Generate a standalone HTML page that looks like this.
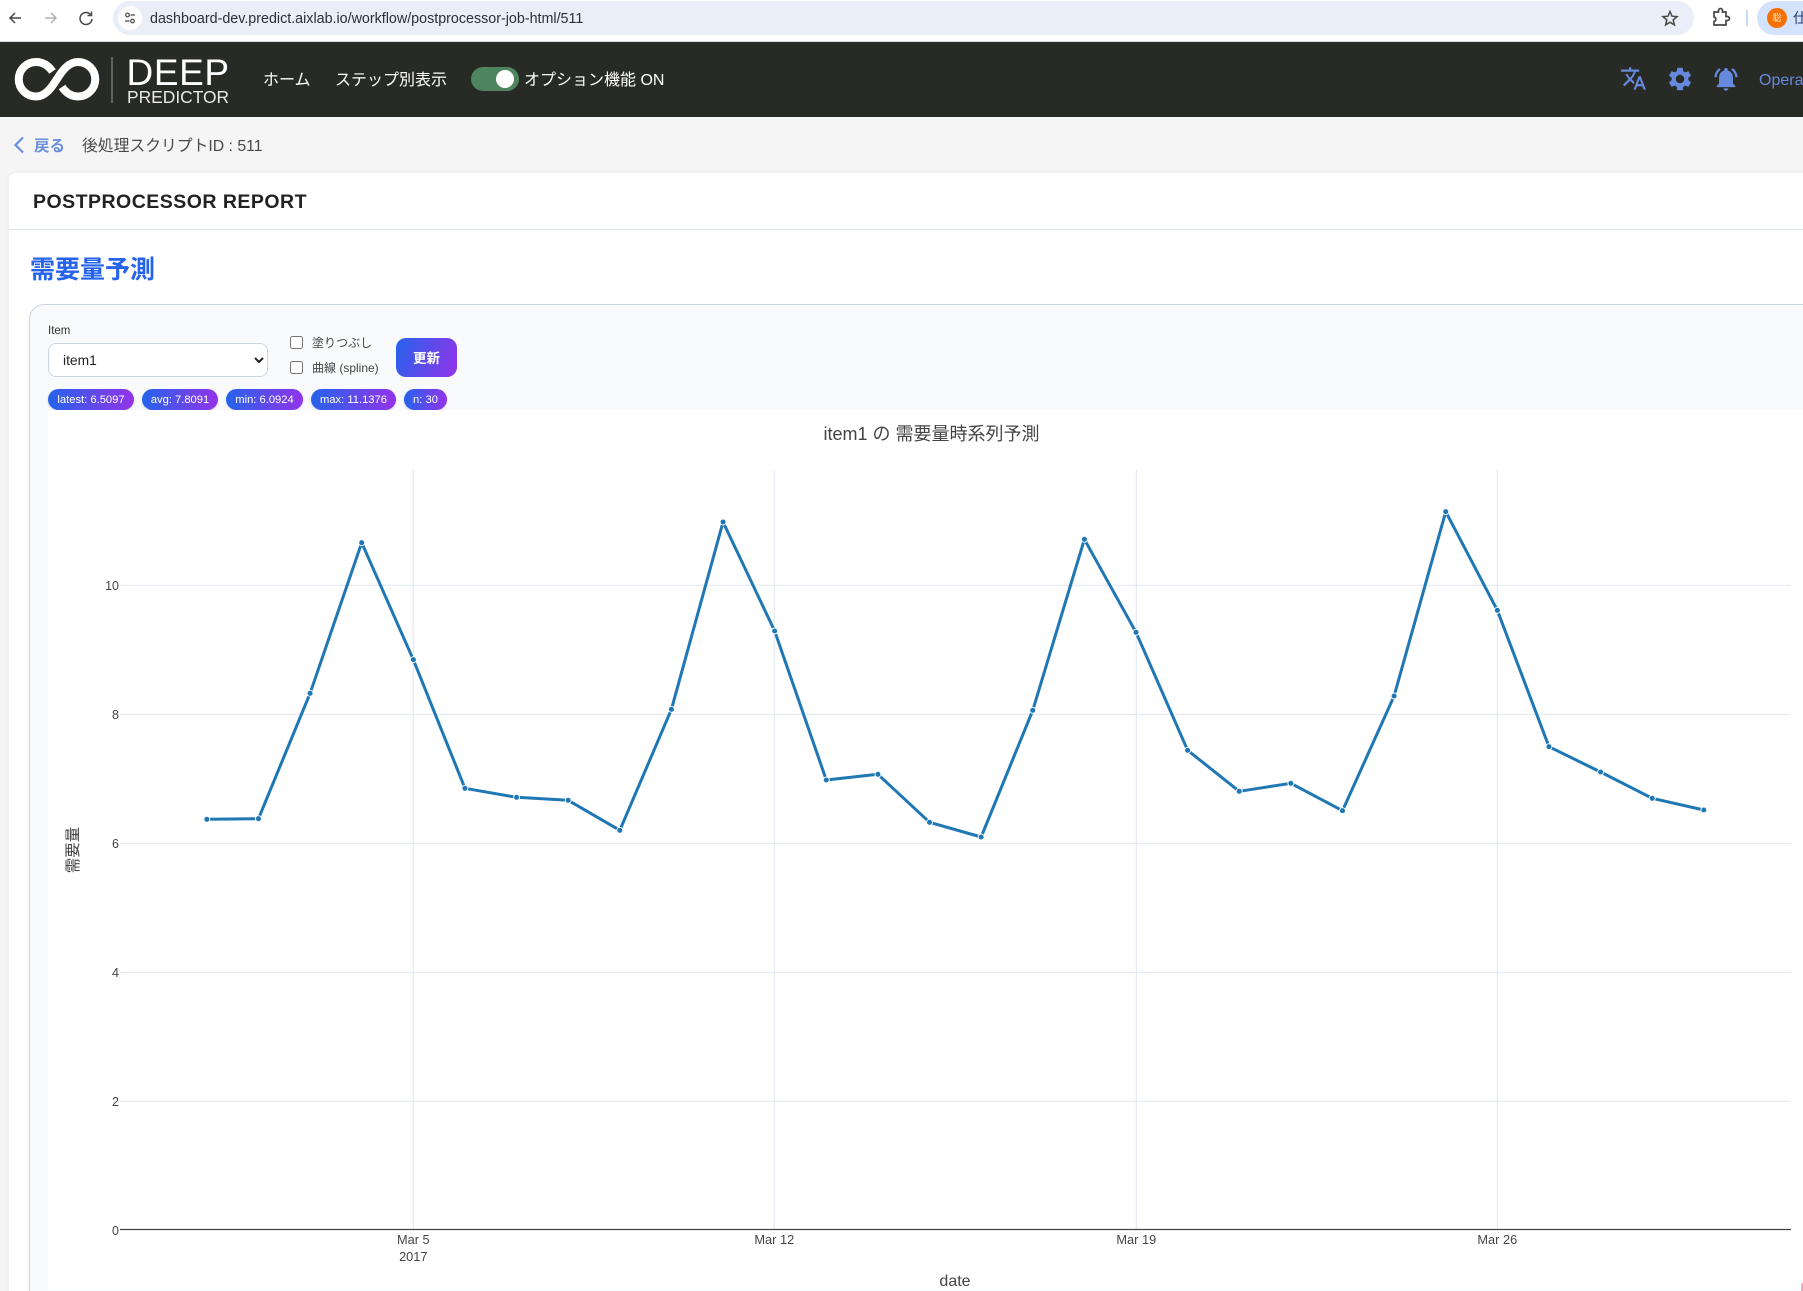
<!DOCTYPE html>
<html lang="ja"><head><meta charset="utf-8"><title>Postprocessor Report</title>
<style>
*{box-sizing:border-box}
html,body{margin:0;padding:0;width:1803px;height:1291px;overflow:hidden;background:#f5f5f5;font-family:"Liberation Sans","Noto Sans CJK JP",sans-serif}
#page{position:relative;width:1803px;height:1291px;overflow:hidden;background:#f5f5f5}
.a{position:absolute;white-space:nowrap}
.pill{position:absolute;top:389px;height:21px;border-radius:11px;background:linear-gradient(90deg,#2563eb,#9333ea);color:#fff;font-size:11.2px;line-height:23px;text-align:center;box-shadow:0 1px 2px rgba(60,60,120,.2);overflow:hidden}
svg{position:absolute;overflow:visible}
</style></head><body><div id="page">
<!-- browser chrome -->
<div class="a" style="left:0;top:0;width:1803px;height:42px;background:#fff;border-bottom:1px solid #dcdcdc"></div>
<div class="a" style="left:113px;top:1px;width:1581px;height:34px;border-radius:17px;background:#e9eef8"></div>
<div class="a" style="left:118px;top:6px;width:24px;height:24px;border-radius:12px;background:#fff"></div>
<svg style="left:0;top:0" width="1803" height="42" fill="none" stroke-width="1.5">
 <path d="M21 18H10M15 13L10 18l5 5" stroke="#474747"/>
 <path d="M45 18h11M51 13l5 5-5 5" stroke="#b1b1b1"/>
 <path d="M90.500 14.500A6 6 0 1 0 92 19" stroke="#474747"/><path d="M91.500 11.500v4h-4" stroke="#474747"/>
 <g stroke="#474747" stroke-width="1.200"><circle cx="127.500" cy="15" r="1.800"/><path d="M130.500 15H135M125 21h4.500"/><circle cx="132.500" cy="21" r="1.800"/></g>
 <path d="M1670 11.500l2 4.700 5.100.4-3.900 3.300 1.200 5-4.400-2.700-4.400 2.700 1.200-5-3.900-3.300 5.100-.4z" stroke="#474747" stroke-width="1.500"/>
 <path d="M1714 12h4.500v-1.500a2 2 0 0 1 4 0V12h3.500v4.500h1.500a2 2 0 0 1 0 4H1726V25h-12v-3.500a2.300 2.300 0 0 0 0-4.500z" stroke="#474747" stroke-width="1.700"/>
 <path d="M1747 10v16" stroke="#c7d9f5" stroke-width="2"/>
</svg>
<div class="a" style="left:150px;top:9.500px;font-size:14.300px;line-height:18px;color:#2b2f36">dashboard-dev.predict.aixlab.io/workflow/postprocessor-job-html/511</div>
<div class="a" style="left:1757px;top:1px;width:60px;height:34px;border-radius:17px 0 0 17px;background:#d3e3fd"></div>
<div class="a" style="left:1767px;top:8px;width:20px;height:20px;border-radius:10px;background:#f57200;color:#ffe9d6;font-size:9px;line-height:20px;text-align:center">聡</div>
<div class="a" style="left:1793px;top:9px;font-size:14px;line-height:18px;color:#1f3a6e">仕</div>

<!-- app header -->
<div class="a" style="left:0;top:42px;width:1803px;height:75px;background:#282a25"></div>
<svg style="left:0;top:42px" width="240" height="75" fill="none">
 <path d="M52.500 29.500C48 23 42.500 20 36 20A17 17 0 0 0 36 54.500C45 54.500 51 46.500 57 37C63 27.500 69 20 78 20A17 17 0 0 1 78 54.500C71.500 54.500 66.500 51.500 62 45" stroke="#fff" stroke-width="8"/>
 <path d="M112 15v46" stroke="#8b8c88" stroke-width="1.200"/>
</svg>
<div class="a" style="left:126.500px;top:53px;font-size:37px;line-height:40px;letter-spacing:.6px;color:#fff">DEEP</div>
<div class="a" style="left:127px;top:87px;font-size:17.400px;line-height:20px;color:#e8e8e8">PREDICTOR</div>
<div class="a" style="left:263px;top:71px;font-size:16px;line-height:20px;color:#fff">ホーム</div>
<div class="a" style="left:335px;top:71px;font-size:16px;line-height:20px;color:#fff">ステップ別表示</div>
<div class="a" style="left:471px;top:67px;width:48px;height:24px;border-radius:12px;background:#4f8460"></div>
<div class="a" style="left:496px;top:70px;width:18px;height:18px;border-radius:9px;background:#fff"></div>
<div class="a" style="left:524px;top:71px;font-size:16px;line-height:20px;color:#fff">オプション機能 ON</div>
<svg style="left:1619.500px;top:65px" width="27" height="27" viewBox="0 0 24 24" fill="#6689dd"><path d="M12.870 15.070l-2.540-2.510.03-.03c1.740-1.940 2.980-4.170 3.710-6.530H17V4h-7V2H8v2H1v1.990h11.170C11.500 7.920 10.440 9.750 9 11.350 8.070 10.320 7.300 9.190 6.690 8h-2c.73 1.630 1.730 3.170 2.980 4.560l-5.090 5.020L4 19l5-5 3.110 3.110.76-2.040zM18.500 10h-2L12 22h2l1.120-3h4.750L21 22h2l-4.500-12zm-2.620 7l1.620-4.330L19.120 17h-3.240z"/></svg>
<svg style="left:1665.500px;top:65px" width="28" height="28" viewBox="0 0 24 24" fill="#6689dd"><path d="M19.140 12.940c.04-.3.06-.61.06-.94 0-.32-.02-.64-.07-.94l2.030-1.580c.18-.14.23-.41.12-.61l-1.920-3.320c-.12-.22-.37-.29-.59-.22l-2.390.96c-.5-.38-1.030-.7-1.620-.94l-.36-2.540c-.04-.24-.24-.41-.48-.41h-3.840c-.24 0-.43.17-.47.41l-.36 2.540c-.59.24-1.130.57-1.620.94l-2.390-.96c-.22-.08-.47 0-.59.22L2.740 8.870c-.12.21-.08.47.12.61l2.030 1.580c-.05.3-.09.63-.09.94s.02.64.07.94l-2.030 1.580c-.18.14-.23.41-.12.61l1.920 3.320c.12.22.37.29.59.22l2.390-.96c.5.38 1.030.7 1.620.94l.36 2.540c.05.24.24.41.48.41h3.840c.24 0 .44-.17.47-.41l.36-2.540c.59-.24 1.130-.56 1.620-.94l2.390.96c.22.08.47 0 .59-.22l1.920-3.320c.12-.22.07-.47-.12-.61l-2.010-1.580zM12 15.600c-1.980 0-3.600-1.620-3.600-3.600s1.620-3.600 3.600-3.600 3.600 1.620 3.600 3.600-1.620 3.600-3.600 3.600z"/></svg>
<svg style="left:1711.500px;top:65px" width="28" height="28" viewBox="0 0 24 24" fill="#6689dd"><path d="M7.580 4.080L6.150 2.650C3.750 4.480 2.170 7.300 2.030 10.500h2c.15-2.650 1.510-4.970 3.550-6.420zm12.390 6.420h2c-.15-3.200-1.730-6.020-4.120-7.850l-1.420 1.430c2.020 1.450 3.390 3.770 3.540 6.420zM18 11c0-3.070-1.640-5.640-4.500-6.320V4c0-.83-.67-1.500-1.500-1.500s-1.500.67-1.500 1.500v.68C7.630 5.360 6 7.920 6 11v5l-2 2v1h16v-1l-2-2v-5zm-6 11c.14 0 .27-.01.4-.04.65-.14 1.180-.58 1.440-1.180.1-.24.15-.5.15-.78h-4c.01 1.100.9 2 2.010 2z"/></svg>
<div class="a" style="left:1759px;top:71px;font-size:16px;line-height:20px;color:#6689dd">Opera</div>

<!-- breadcrumb -->
<svg style="left:0;top:130px" width="30" height="30" fill="none"><path d="M23 7.500L15.500 15l7.500 7.500" stroke="#6a8fd8" stroke-width="2.200"/></svg>
<div class="a" style="left:34px;top:136.500px;font-size:15.500px;line-height:20px;font-weight:700;color:#6a8fd8">戻る</div>
<div class="a" style="left:82px;top:137px;font-size:15.800px;line-height:20px;color:#4a4a4a">後処理スクリプトID : 511</div>

<!-- card -->
<div class="a" style="left:9px;top:173px;width:1800px;height:1130px;background:#fff;border-radius:7px 0 0 0;box-shadow:0 0 6px rgba(0,0,0,.05)"></div>
<div class="a" style="left:33px;top:189.500px;font-size:19.500px;line-height:24px;font-weight:700;letter-spacing:.48px;color:#222">POSTPROCESSOR REPORT</div>
<div class="a" style="left:9px;top:229px;width:1794px;height:1px;background:#dde6ee"></div>
<div class="a" style="left:30px;top:254px;font-size:25px;line-height:32px;font-weight:700;color:#2563eb">需要量予測</div>

<!-- panel -->
<div class="a" style="left:29px;top:304px;width:1800px;height:1050px;background:#f8fafc;border:1px solid #cbd5e1;border-radius:15px"></div>
<label class="a" style="left:48px;top:324px;font-size:11.500px;line-height:14px;color:#333">Item</label>
<select class="a" style="left:48px;top:343px;width:220px;height:34px;border:1px solid #cbd5e1;border-radius:8px;background-color:#fff;font:13.800px 'Liberation Sans',sans-serif;color:#222;padding-left:10px"><option>item1</option></select>
<input type="checkbox" class="a" style="left:290px;top:336px;width:13px;height:13px;margin:0">
<input type="checkbox" class="a" style="left:290px;top:361px;width:13px;height:13px;margin:0">
<div class="a" style="left:312px;top:335px;font-size:12px;line-height:16px;color:#444">塗りつぶし</div>
<div class="a" style="left:312px;top:360px;font-size:12px;line-height:16px;color:#444">曲線 (spline)</div>
<div class="a" style="left:396px;top:338px;width:61px;height:39px;border-radius:10px;background:linear-gradient(110deg,#2563eb,#9333ea);color:#fff;font-size:13.500px;font-weight:700;line-height:41px;text-align:center">更新</div>
<div class="pill" style="left:48px;width:86px">latest: 6.5097</div>
<div class="pill" style="left:142px;width:76px">avg: 7.8091</div>
<div class="pill" style="left:226px;width:77px">min: 6.0924</div>
<div class="pill" style="left:311px;width:85px">max: 11.1376</div>
<div class="pill" style="left:404px;width:43px">n: 30</div>

<!-- chart -->
<div class="a" style="left:48px;top:410px;width:1760px;height:880px;background:#fff"></div>
<svg style="left:0;top:0" width="1803" height="1291" font-family="'Liberation Sans','Noto Sans CJK JP',sans-serif" fill="#444">
 <g stroke="#e4e9f2" stroke-width="1.150" fill="none">
  <path d="M413.300 470V1229M774.300 470V1229M1136.300 470V1229M1497.300 470V1229"/>
  <path d="M120 585.300H1791M120 714.300H1791M120 843.300H1791M120 972.300H1791M120 1101.300H1791"/>
 </g>
 <path d="M120 1229.500H1791" stroke="#444" stroke-width="1.300" fill="none"/>
 <polyline fill="none" stroke="#1f77b4" stroke-width="3" stroke-linejoin="round" points="206.85,819.3 258.47,818.7 310.09,693.3 361.71,542.7 413.33,659.7 464.95,788.3 516.57,797.3 568.19,800.3 619.81,830.3 671.43,709.3 723.05,522 774.67,631 826.29,780 877.91,774.3 929.53,822.3 981.15,837 1032.77,710.3 1084.39,539.3 1136.01,632.3 1187.63,750.3 1239.25,791.3 1290.87,783.3 1342.49,810.7 1394.11,696 1445.73,511.7 1497.35,610.3 1548.97,746.7 1600.59,772 1652.21,798.3 1703.83,810"/>
 <g fill="#1f77b4" stroke="#fff" stroke-width=".9">
  <circle cx="206.85" cy="819.3" r="3"/><circle cx="258.47" cy="818.7" r="3"/><circle cx="310.09" cy="693.3" r="3"/><circle cx="361.71" cy="542.7" r="3"/><circle cx="413.33" cy="659.7" r="3"/><circle cx="464.95" cy="788.3" r="3"/><circle cx="516.57" cy="797.3" r="3"/><circle cx="568.19" cy="800.3" r="3"/><circle cx="619.81" cy="830.3" r="3"/><circle cx="671.43" cy="709.3" r="3"/><circle cx="723.05" cy="522" r="3"/><circle cx="774.67" cy="631" r="3"/><circle cx="826.29" cy="780" r="3"/><circle cx="877.91" cy="774.3" r="3"/><circle cx="929.53" cy="822.3" r="3"/><circle cx="981.15" cy="837" r="3"/><circle cx="1032.77" cy="710.3" r="3"/><circle cx="1084.39" cy="539.3" r="3"/><circle cx="1136.01" cy="632.3" r="3"/><circle cx="1187.63" cy="750.3" r="3"/><circle cx="1239.25" cy="791.3" r="3"/><circle cx="1290.87" cy="783.3" r="3"/><circle cx="1342.49" cy="810.7" r="3"/><circle cx="1394.11" cy="696" r="3"/><circle cx="1445.73" cy="511.7" r="3"/><circle cx="1497.35" cy="610.3" r="3"/><circle cx="1548.97" cy="746.7" r="3"/><circle cx="1600.59" cy="772" r="3"/><circle cx="1652.21" cy="798.3" r="3"/><circle cx="1703.83" cy="810" r="3"/>
 </g>
 <text x="931.500" y="440" font-size="18" text-anchor="middle">item1 の 需要量時系列予測</text>
 <g font-size="12.500" text-anchor="end">
  <text x="119" y="590">10</text><text x="119" y="719">8</text><text x="119" y="848">6</text><text x="119" y="977">4</text><text x="119" y="1106">2</text><text x="119" y="1235">0</text>
 </g>
 <g font-size="12.800" text-anchor="middle">
  <text x="413.300" y="1244">Mar 5</text><text x="413.300" y="1261">2017</text>
  <text x="774.300" y="1244">Mar 12</text><text x="1136.300" y="1244">Mar 19</text><text x="1497.300" y="1244">Mar 26</text>
 </g>
 <text x="955" y="1286" font-size="16" text-anchor="middle">date</text>
 <text transform="translate(78,850) rotate(-90)" font-size="15.500" text-anchor="middle">需要量</text>
</svg>
<div class="a" style="left:1801px;top:1282px;width:8px;height:12px;border-radius:4px;background:#f6a5bd"></div>
</div></body></html>
